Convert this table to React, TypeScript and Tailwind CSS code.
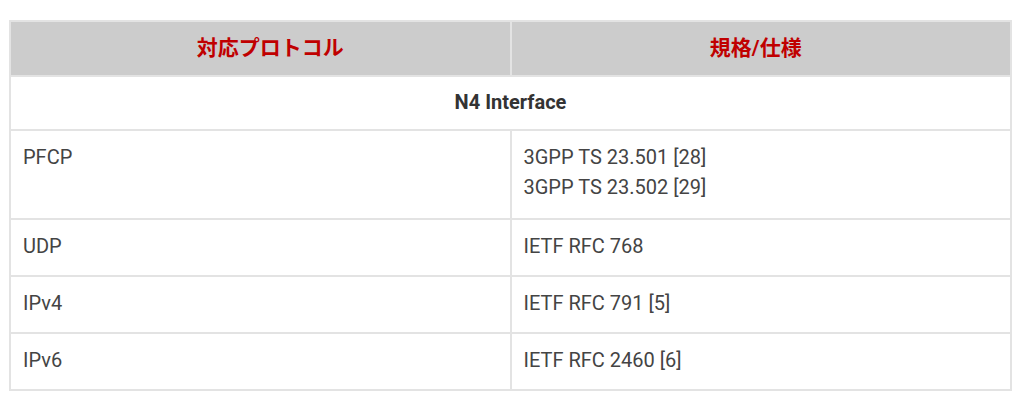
import React from 'react';

interface Row {
  protocol: string;
  specs: string[];
  height: string;
}

const rows: Row[] = [
  { protocol: 'PFCP', specs: ['3GPP TS 23.501 [28]', '3GPP TS 23.502 [29]'], height: 'h-[89px]' },
  { protocol: 'UDP', specs: ['IETF RFC 768'], height: 'h-[57px]' },
  { protocol: 'IPv4', specs: ['IETF RFC 791 [5]'], height: 'h-[57px]' },
  { protocol: 'IPv6', specs: ['IETF RFC 2460 [6]'], height: 'h-[57px]' },
];

const App: React.FC = () => {
  return (
    <div className="w-[1024px] h-[417px] bg-white pt-[20px] pl-[9px] font-['Roboto','Noto_Sans_CJK_JP',sans-serif]">
      <table className="w-[1003px] table-fixed border-collapse border-2 border-[#e3e3e3] text-[20px]">
        <thead>
          <tr className="h-[55px] bg-[#cccccc]">
            <th className="w-1/2 border-2 border-[#e3e3e3] pl-[20px] text-center align-middle text-[21px] font-bold text-[#c00000]">
              対応プロトコル
            </th>
            <th className="w-1/2 border-2 border-[#e3e3e3] pr-[10px] text-center align-middle text-[21px] font-bold text-[#c00000]">
              規格/仕様
            </th>
          </tr>
        </thead>
        <tbody>
          <tr className="h-[54px]">
            <td colSpan={2} className="border-2 border-[#e3e3e3] pb-[3px] text-center align-middle font-bold text-[#333333]">
              N4 Interface
            </td>
          </tr>
          {rows.map((row) => (
            <tr key={row.protocol} className={row.height}>
              <td className="border-2 border-[#e3e3e3] px-[12px] pt-[11px] align-top text-[#444444] leading-[30px]">
                {row.protocol}
              </td>
              <td className="border-2 border-[#e3e3e3] px-[12px] pt-[11px] align-top text-[#444444] leading-[30px]">
                {row.specs.map((s) => (
                  <div key={s}>{s}</div>
                ))}
              </td>
            </tr>
          ))}
        </tbody>
      </table>
    </div>
  );
};

export default App;
